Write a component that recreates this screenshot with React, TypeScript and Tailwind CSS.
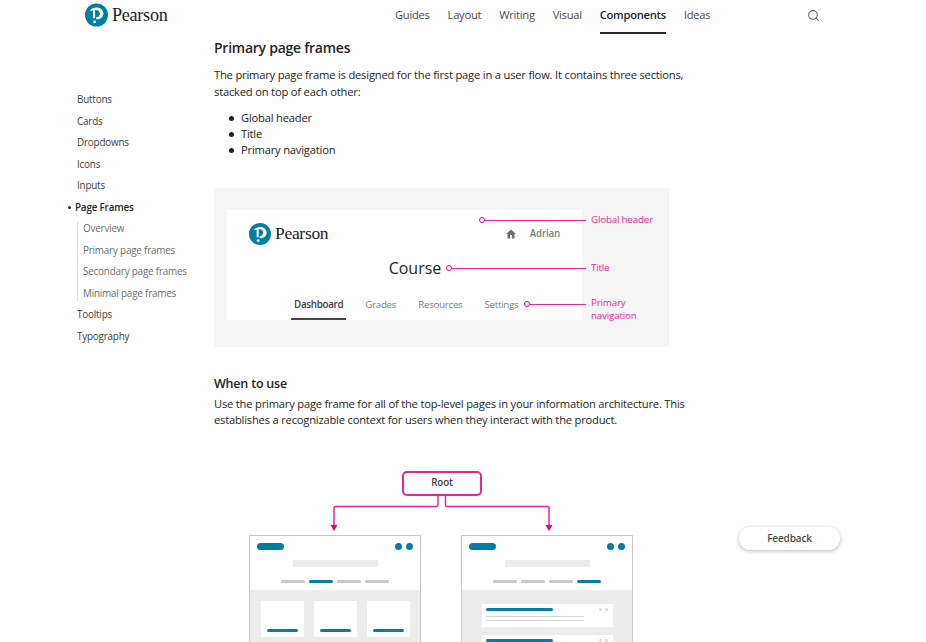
import { Search } from 'lucide-react';

const navItems = ['Guides', 'Layout', 'Writing', 'Visual', 'Components', 'Ideas'];

function Logo({ small }: { small?: boolean }) {
  return (
    <div className="flex items-center gap-[4px]">
      <svg viewBox="0 0 24 24" className={small ? 'w-[22px] h-[24px] shrink-0' : 'w-[23px] h-[24px] shrink-0'}>
        <circle cx="12" cy="12" r="12" fill="#007fa3" />
        <path
          d="M5 7.500C6.800 5.400 9.200 4.300 12 4.300c4.200 0 7.200 2.700 7.200 6.200 0 3.500-2.700 6-6.500 6h-1v-2.200c2.400-.1 3.800-1.600 3.800-3.700 0-2.300-1.600-3.900-3.700-3.900-.5 0-.9.1-1.300.2v8.600H8.300V7.400C7.100 7.600 6 7.800 5 7.500z"
          fill="#fff"
        />
        <circle cx="10" cy="19.200" r="1.500" fill="#fff" />
      </svg>
      <span
        className={`font-['Liberation_Serif',serif] text-[#1c1c1c] leading-none tracking-[-0.3px] ${
          small ? 'text-[17.500px]' : 'text-[18.200px]'
        }`}
      >
        Pearson
      </span>
    </div>
  );
}

function Marker({ className }: { className: string }) {
  return <span className={`absolute w-[6px] h-[6px] rounded-full border-[1.500px] border-[#e5007e] bg-white ${className}`} />;
}

function PageFrameDiagram() {
  return (
    <div className="relative mt-[30px] w-[455px] h-[159px] bg-[#f5f5f5] pt-[22px] pl-[13px]">
      <div className="w-[355px] h-[110px] bg-white flex flex-col">
        <div className="flex items-center justify-between px-[22px] pt-[12px]">
          <Logo small />
          <div className="flex items-center gap-[13px] text-[9.800px] tracking-[-0.2px] text-[#7a7f7f] font-semibold">
            <svg viewBox="0 0 24 24" className="w-[12px] h-[12px]" fill="#6a7070">
              <path d="M10 21v-7h4v7h5v-9h3L12 3 2 12h3v9z" />
            </svg>
            <span>Adrian</span>
          </div>
        </div>
        <div className="text-center text-[16px] leading-[20px] text-[#252525] pl-[21px] mt-[12px]">Course</div>
        <div className="flex gap-[22px] pl-[67px] mt-[19px] text-[9.800px] tracking-[-0.3px] leading-[15px] text-[#7a7f7f]">
          <span className="font-semibold text-[#3d3d3d]">Dashboard</span>
          <span>Grades</span>
          <span>Resources</span>
          <span>Settings</span>
        </div>
      </div>
      {/* dashboard underline */}
      <div className="absolute left-[77px] top-[130px] w-[55px] h-[2px] bg-[#454545]" />
      {/* pink callouts */}
      <div className="absolute left-[268px] top-[31.500px] w-[104px] h-px bg-[#e8288f]" />
      <Marker className="left-[265px] top-[29px]" />
      <div className="absolute left-[236px] top-[79.500px] w-[136px] h-px bg-[#e8288f]" />
      <Marker className="left-[232px] top-[77px]" />
      <div className="absolute left-[314px] top-[115.500px] w-[58px] h-px bg-[#e8288f]" />
      <Marker className="left-[310px] top-[113px]" />
      <span className="absolute left-[377px] top-[24px] text-[9.800px] tracking-[-0.2px] leading-[15px] whitespace-nowrap text-[#e8288f]">Global header</span>
      <span className="absolute left-[377px] top-[72px] text-[9.800px] tracking-[-0.2px] leading-[15px] text-[#e8288f]">Title</span>
      <span className="absolute left-[377px] top-[108px] w-[60px] text-[9.800px] tracking-[-0.2px] leading-[13px] text-[#e8288f]">Primary navigation</span>
    </div>
  );
}

function WireHeader({ active }: { active: number }) {
  return (
    <div className="bg-white h-[54px] px-[7px] pt-[7px]">
      <div className="flex items-center justify-between">
        <div className="w-[27px] h-[7px] rounded-full bg-[#007fa3]" />
        <div className="flex gap-[4px]">
          <div className="w-[7px] h-[7px] rounded-full bg-[#007fa3]" />
          <div className="w-[7px] h-[7px] rounded-full bg-[#007fa3]" />
        </div>
      </div>
      <div className="w-[85px] h-[7px] bg-[#ececec] mx-auto mt-[10px]" />
      <div className="flex justify-center gap-[4px] mt-[13px]">
        {[0, 1, 2, 3].map((i) => (
          <div key={i} className={`w-[24px] h-[3px] rounded-full ${i === active ? 'bg-[#007fa3]' : 'bg-[#c7c7c7]'}`} />
        ))}
      </div>
    </div>
  );
}

function ListCard() {
  return (
    <div className="w-[131px] h-[23px] bg-white px-[4px] pt-[4px] mb-[8px] shrink-0">
      <div className="flex items-center justify-between">
        <div className="w-[67px] h-[3px] bg-[#007fa3] rounded-full" />
        <div className="flex gap-[3px] pr-[1px]">
          <div className="w-[3px] h-[3px] rounded-full bg-[#d9d9d9]" />
          <div className="w-[3px] h-[3px] rounded-full bg-[#d9d9d9]" />
        </div>
      </div>
      <div className="w-[98px] h-px bg-[#d4d4d4] mt-[5px]" />
      <div className="w-[98px] h-px bg-[#d4d4d4] mt-[3px]" />
    </div>
  );
}

function Tree() {
  return (
    <div className="relative mt-[43px] w-[455px] h-[171px]">
      <div className="absolute left-[188px] top-0 w-[80px] h-[25px] rounded-[5px] border-2 border-[#e8288f] bg-white flex items-center justify-center text-[9.800px] tracking-[-0.1px] font-semibold text-[#3d3d3d]">
        Root
      </div>
      <svg viewBox="0 0 455 64" className="absolute left-0 top-[24px] w-[455px] h-[64px]" fill="none">
        <path d="M224 0v10a1.500 1.500 0 0 1-1.500 1.500H122a2 2 0 0 0-2 2V30" stroke="#e8288f" strokeWidth="1.500" />
        <path d="M231.500 0v10a1.500 1.500 0 0 0 1.500 1.500H333a2 2 0 0 1 2 2V30" stroke="#e8288f" strokeWidth="1.500" />
        <path d="M116.500 30h7l-3.500 6zM331.500 30h7l-3.500 6z" fill="#e5007e" />
      </svg>
      <div className="absolute left-[35px] top-[64px] w-[172px] h-[110px] border border-[#c9c9c9] bg-[#ececec] overflow-hidden">
        <WireHeader active={1} />
        <div className="flex justify-center gap-[10px] pt-[11px]">
          {[0, 1, 2].map((i) => (
            <div key={i} className="w-[43px] h-[36px] bg-white flex items-end justify-center pb-[5px]">
              <div className="w-[31px] h-[3px] rounded-full bg-[#007fa3]" />
            </div>
          ))}
        </div>
      </div>
      <div className="absolute left-[247px] top-[64px] w-[172px] h-[110px] border border-[#c9c9c9] bg-[#ececec] overflow-hidden">
        <WireHeader active={3} />
        <div className="flex flex-col items-center pt-[14px]">
          <ListCard />
          <ListCard />
        </div>
      </div>
    </div>
  );
}

export default function App() {
  return (
    <div className="relative w-[926px] h-[642px] overflow-hidden bg-white font-['Open_Sans',sans-serif] text-[#252525]">
      {/* Top bar */}
      <header className="flex h-[34px] pl-[85px]">
        <div className="pt-[3px] w-[310px]">
          <Logo />
        </div>
        <nav className="flex gap-[18px] h-[34px]">
          {navItems.map((item) => (
            <a
              key={item}
              className={`h-[34px] pt-[6px] text-[11.200px] tracking-[-0.28px] leading-[17px] ${
                item === 'Components' ? 'font-semibold text-[#252525] border-b-2 border-[#252525]' : 'text-[#4b4b4b]'
              }`}
            >
              {item}
            </a>
          ))}
        </nav>
        <div className="ml-[97px] pt-[9px] text-[#5f6565]">
          <Search size={13} strokeWidth={2} />
        </div>
      </header>

      <div className="flex">
        {/* Sidebar */}
        <aside className="w-[214px] pl-[77px] pt-[58px] shrink-0 text-[9.900px] tracking-[-0.2px] leading-[15px] text-[#3d3d3d]">
          <ul className="flex flex-col gap-[6.500px]">
            {['Buttons', 'Cards', 'Dropdowns', 'Icons', 'Inputs'].map((s) => (
              <li key={s}>{s}</li>
            ))}
            <li className="relative -ml-[2px] font-semibold text-[#252525]">
              <span className="absolute -left-[7px] top-[6px] w-[3px] h-[3px] rounded-full bg-[#252525]" />
              Page Frames
            </li>
            <li className="border-l border-[#dcdcdc] pl-[5px] flex flex-col gap-[6.500px] text-[#6a7070] whitespace-nowrap">
              <span>Overview</span>
              <span>Primary page frames</span>
              <span>Secondary page frames</span>
              <span>Minimal page frames</span>
            </li>
            <li>Tooltips</li>
            <li>Typography</li>
          </ul>
        </aside>

        {/* Main column */}
        <main className="w-[480px] pt-[3px]">
          <h2 className="text-[14px] tracking-[-0.25px] leading-[22px] font-semibold">Primary page frames</h2>
          <p className="mt-[8px] text-[11.200px] tracking-[-0.2px] leading-[16.500px] whitespace-nowrap">
            The primary page frame is designed for the first page in a user flow. It contains three sections,
            <br />
            stacked on top of each other:
          </p>
          <ul className="mt-[10px] pl-[27px] text-[11.200px] tracking-[-0.2px] leading-[16px]">
            {['Global header', 'Title', 'Primary navigation'].map((s) => (
              <li key={s} className="relative">
                <span className="absolute -left-[12px] top-[6px] w-[5px] h-[5px] rounded-full bg-[#252525]" />
                {s}
              </li>
            ))}
          </ul>
          <PageFrameDiagram />
          <h3 className="mt-[27px] text-[12.500px] tracking-[-0.2px] leading-[20px] font-semibold">When to use</h3>
          <p className="mt-[2px] text-[11.200px] tracking-[-0.21px] leading-[16px] whitespace-nowrap">
            Use the primary page frame for all of the top-level pages in your information architecture. This
            <br />
            establishes a recognizable context for users when they interact with the product.
          </p>
          <Tree />
        </main>
      </div>

      {/* Floating feedback button */}
      <button className="absolute left-[739px] top-[527px] w-[101px] h-[23px] rounded-full bg-white shadow-[0_1px_4px_rgba(0,0,0,0.28)] text-[10px] tracking-[-0.15px] font-semibold text-[#4b4b4b]">
        Feedback
      </button>
    </div>
  );
}
